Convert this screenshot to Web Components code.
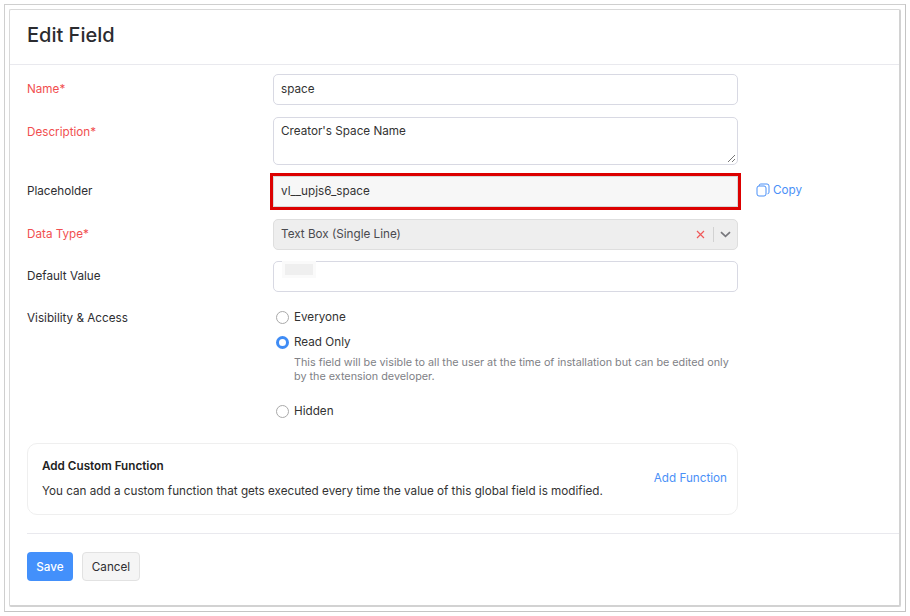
<!DOCTYPE html>
<html><head><meta charset="utf-8"><title>Edit Field</title>
<style>
html,body{margin:0;padding:0;background:#fff}
body{font-family:Inter,"Liberation Sans",sans-serif;font-size:11.7px;color:#222;width:910px;height:616px;overflow:hidden}
</style></head><body>
<edit-frame>
  <h-title slot="title">Edit Field</h-title>
  <form-row label="Name" required h="31"><text-box>space</text-box></form-row>
  <form-row label="Description" required h="48" gap="12"><text-box area>Creator's Space Name</text-box></form-row>
  <form-row label="Placeholder" h="31" gap="11">
    <text-box readonly highlight>vl__upjs6_space</text-box>
    <copy-link slot="after"></copy-link>
  </form-row>
  <form-row label="Data Type" required h="31" gap="12"><select-box>Text Box (Single Line)</select-box></form-row>
  <form-row label="Default Value" h="31" gap="11"><text-box blurred></text-box></form-row>
  <form-row label="Visibility &amp; Access" gap="11" plain>
    <radio-group>
      <radio-opt>Everyone</radio-opt>
      <radio-opt checked note="This field will be visible to all the user at the time of installation but can be edited only by the extension developer.">Read Only</radio-opt>
      <radio-opt>Hidden</radio-opt>
    </radio-group>
  </form-row>
  <function-box></function-box>
  <action-bar slot="footer"></action-bar>
</edit-frame>
<script>
function def(name, html, init){
  customElements.define(name, class extends HTMLElement{
    constructor(){super();this.attachShadow({mode:'open'}).innerHTML=typeof html==='function'?html(this):html;}
    connectedCallback(){ if(init) init(this); }
  });
}
def('edit-frame',`<style>
:host{display:block;box-sizing:border-box;width:902px;height:608px;margin:4px 0 0 4px;border:1px solid #cfcfcf;border-right-color:#c4c4c4;border-bottom-color:#c4c4c4;padding:4px}
.card{box-sizing:border-box;width:892px;height:598px;border:1px solid #d9d9d9;border-right:2px solid #d2d2d2;border-bottom:2px solid #d2d2d2;border-radius:2px;display:flex;flex-direction:column;background:#fff}
header{box-sizing:border-box;height:55px;border-bottom:1px solid #e9e9ee;padding:0 0 4px 17px;display:flex;align-items:center;flex:none}
main{padding:9px 0 0 17px;flex:1}
footer{box-sizing:border-box;margin-left:17px;border-top:1px solid #e9e9ee;padding-top:18px;flex:none;height:72px}
</style><div class="card"><header><slot name="title"></slot></header><main><slot></slot></main><footer><slot name="footer"></slot></footer></div>`);
def('h-title',`<style>:host{display:block;font-size:20px;font-weight:500;color:#2b2b2f}</style><slot></slot>`);
def('form-row',el=>{
  const h=el.getAttribute('h'),gap=el.getAttribute('gap')||0,req=el.hasAttribute('required');
  return `<style>:host{display:flex;margin-top:${gap}px;align-items:flex-start}
  .l{width:246px;flex:none;font-size:11.7px;line-height:30px;color:${req?'#f14f50':'#2e2e32'}}
  .c{width:465px;flex:none;${h?`height:${h}px;`:''}}
  .a{flex:none;margin-left:18px;display:flex;align-items:center;height:28px}</style>
  <div class="l">${el.getAttribute('label')}${req?'*':''}</div><div class="c"><slot></slot></div><div class="a"><slot name="after"></slot></div>`;
});
def('text-box',el=>{
  const area=el.hasAttribute('area'),ro=el.hasAttribute('readonly'),hl=el.hasAttribute('highlight'),bl=el.hasAttribute('blurred');
  return `<style>:host{display:block;box-sizing:border-box;height:100%;border:1px solid ${hl?'#d8d8d8':'#d8d9e3'};border-radius:${hl?'0':'5'}px;padding:${area?'5px':'0'} 7px;background:${ro?'#f7f7f7':'#fff'};color:#333;font-size:11.7px;line-height:${area?'16px':'29px'};position:relative;${hl?'outline:3px solid #dc0000;outline-offset:0;':''}}
  .b{position:absolute;left:11px;top:2px;width:28px;height:11px;background:#efefef;box-shadow:0 0 0 3px #fafafa}
  svg{position:absolute;right:1px;bottom:1px}</style>
  <slot></slot>${bl?'<div class="b"></div>':''}${area?'<svg width="9" height="9" viewBox="0 0 9 9" fill="none" stroke="#777" stroke-width="1"><path d="M1 8 8 1M5 8 8 5"/></svg>':''}`;
});
def('select-box',`<style>:host{display:flex;align-items:center;box-sizing:border-box;height:100%;border:1px solid #dedede;border-radius:5px;padding-left:7px;background:#eeeeee;color:#4a4a4f;font-size:11.7px;line-height:29px}
.t{flex:1}.x{margin-right:8px;display:flex}.s{width:1px;height:15px;background:#d2d2d2}.d{width:23px;display:flex;justify-content:center}</style>
<div class="t"><slot></slot></div>
<div class="x"><svg width="9" height="9" viewBox="0 0 9 9" fill="none" stroke="#f0595a" stroke-width="1.2"><path d="M1 1 8 8M8 1 1 8"/></svg></div><div class="s"></div>
<div class="d"><svg width="11" height="7" viewBox="0 0 11 7" fill="none" stroke="#77777c" stroke-width="1.7"><path d="M1 1.2 5.5 5.4 10 1.2"/></svg></div>`);
def('copy-link',`<style>:host{display:inline-flex;align-items:center;gap:3px;color:#4a90f7;font-size:11.7px;line-height:28px}svg{display:block}</style>
<svg width="14" height="14" viewBox="0 0 14 14" fill="none" stroke="#4a90f7" stroke-width="1"><rect x="1" y="3" width="9" height="10" rx="2"/><path d="M3.2 3V2.6A1.6 1.6 0 0 1 4.8 1H11a2 2 0 0 1 2 2v6.2A1.6 1.6 0 0 1 11.5 10.8"/></svg><span>Copy</span>`);
def('radio-group',`<style>:host{display:flex;flex-direction:column;padding:6px 0 0 3px}</style><slot></slot>`);
def('radio-opt',el=>{
  const c=el.hasAttribute('checked'),n=el.getAttribute('note');
  return `<style>:host{display:block;margin-bottom:${n?19:9}px}
  .r{display:flex;align-items:center;gap:5px;height:16px;font-size:11.7px;color:#333}
  .o{box-sizing:border-box;width:13px;height:13px;border-radius:50%;border:${c?'3.5px solid #3f8cf5':'1px solid #a9a9a9'};background:#fff;flex:none}
  .n{margin:6px 0 0 18px;font-size:10.8px;line-height:14px;color:#808186;width:445px}</style>
  <div class="r"><span class="o"></span><span><slot></slot></span></div>${n?`<div class="n">${n}</div>`:''}`;
});
def('function-box',`<style>:host{display:flex;box-sizing:border-box;width:711px;height:72px;margin-top:15px;border:1px solid #efefef;border-radius:10px;padding:0 10px 2px 14px;align-items:center;justify-content:space-between}
.h{font-size:11.7px;font-weight:600;color:#222;line-height:16px;margin-bottom:9px}.d{font-size:11.7px;color:#333;line-height:16px}.a{color:#4a90f7;font-size:11.7px;margin-top:-1px}</style>
<div><div class="h">Add Custom Function</div><div class="d">You can add a custom function that gets executed every time the value of this global field is modified.</div></div><div class="a">Add Function</div>`);
def('action-bar',`<style>:host{display:flex;gap:9px}
.b{box-sizing:border-box;height:29px;border-radius:4px;display:flex;align-items:center;justify-content:center;font-size:11.7px}
.s{width:46px;background:#4390fb;color:#fff;font-weight:500}.c{width:58px;background:#f5f5f5;border:1px solid #e2e2e2;color:#2e2e32}</style>
<div class="b s">Save</div><div class="b c">Cancel</div>`);
</script>
</body></html>
